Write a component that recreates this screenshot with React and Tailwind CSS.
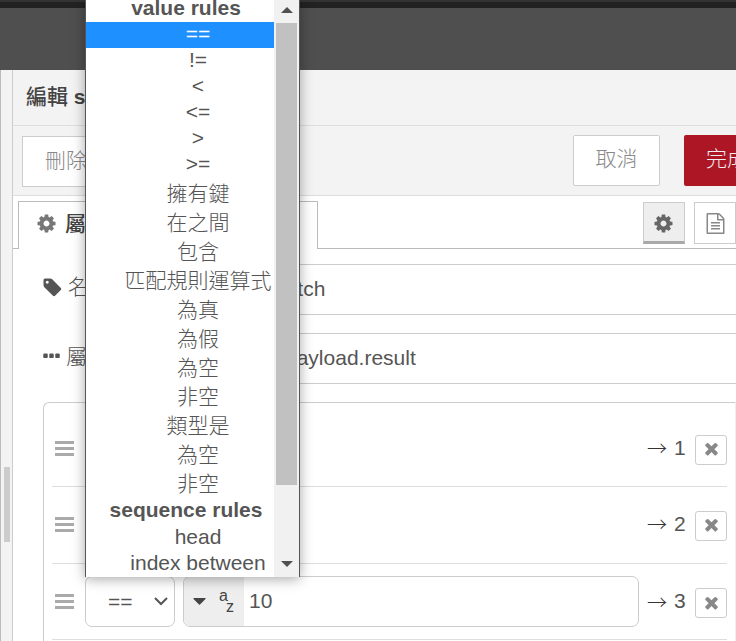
import React from "react";

const PATHS = {
  cog: "M1152 896q0-106-75-181t-181-75-181 75-75 181 75 181 181 75 181-75 75-181zm512-109v222q0 12-8 23t-20 13l-185 28q-19 54-39 91 35 50 107 138 10 12 10 25t-9 23q-27 37-99 108t-94 71q-12 0-26-9l-138-108q-44 23-91 38-16 136-29 186-7 28-36 28h-222q-14 0-24.5-8.5t-11.5-21.5l-28-184q-49-16-90-37l-141 107q-10 9-25 9-14 0-25-11-126-114-165-168-7-10-7-23 0-12 8-23 15-21 51-66.5t54-70.5q-27-50-41-99l-183-27q-13-2-21-12.5t-8-23.5v-222q0-12 8-23t19-13l186-28q14-46 39-92-40-57-107-138-10-12-10-24 0-10 9-23 26-36 98.500-107.500t94.500-71.500q13 0 26 10l138 107q44-23 91-38 16-136 29-186 7-28 36-28h222q14 0 24.500 8.500t11.500 21.500l28 184q49 16 90 37l142-107q9-9 24-9 13 0 25 10 129 119 165 170 7 8 7 22 0 12-8 23-15 21-51 66.500t-54 70.500q26 50 41 98l183 28q13 2 21 12.500t8 23.500z",
  times: "M1490 1322q0 40-28 68l-136 136q-28 28-68 28t-68-28l-294-294-294 294q-28 28-68 28t-68-28l-136-136q-28-28-28-68t28-68l294-294-294-294q-28-28-28-68t28-68l136-136q28-28 68-28t68 28l294 294 294-294q28-28 68-28t68 28l136 136q28 28 28 68t-28 68l-294 294 294 294q28 28 28 68z",
  tag: "M576 448q0-53-37.5-90.5t-90.5-37.5-90.5 37.5-37.5 90.5 37.5 90.5 90.5 37.5 90.5-37.5 37.5-90.5zm1067 576q0 53-37 90l-491 492q-39 37-91 37-53 0-90-37l-715-716q-38-37-64.5-101t-26.5-117v-416q0-52 38-90t90-38h416q53 0 117 26.5t102 64.5l715 714q37 39 37 91z",
  ellipsis: "M576 736v192q0 40-28 68t-68 28h-192q-40 0-68-28t-28-68v-192q0-40 28-68t68-28h192q40 0 68 28t28 68zm512 0v192q0 40-28 68t-68 28h-192q-40 0-68-28t-28-68v-192q0-40 28-68t68-28h192q40 0 68 28t28 68zm512 0v192q0 40-28 68t-68 28h-192q-40 0-68-28t-28-68v-192q0-40 28-68t68-28h192q40 0 68 28t28 68z",
  file: "M1596 380q28 28 48 76t20 88v1152q0 40-28 68t-68 28h-1344q-40 0-68-28t-28-68v-1600q0-40 28-68t68-28h896q40 0 88 20t76 48zm-444-244v376h376q-10-29-22-41l-313-313q-12-12-41-22zm384 1528v-1024h-416q-40 0-68-28t-28-68v-416h-768v1536h1280zm-1024-864q0-14 9-23t23-9h704q14 0 23 9t9 23v64q0 14-9 23t-23 9h-704q-14 0-23-9t-9-23v-64zm736 224q14 0 23 9t9 23v64q0 14-9 23t-23 9h-704q-14 0-23-9t-9-23v-64q0-14 9-23t23-9h704zm0 256q14 0 23 9t9 23v64q0 14-9 23t-23 9h-704q-14 0-23-9t-9-23v-64q0-14 9-23t23-9h704z",
};

function Icon({ name, className }) {
  return (
    <svg viewBox="0 0 1792 1792" className={"shrink-0 " + className} fill="currentColor">
      <path d={PATHS[name]} />
    </svg>
  );
}

function Grip() {
  return (
    <div className="flex w-[19px] shrink-0 flex-col gap-[3px]">
      <div className="h-[3px] bg-[#aaa]" />
      <div className="h-[3px] bg-[#aaa]" />
      <div className="h-[3px] bg-[#aaa]" />
    </div>
  );
}

function Rule({ index, className, children }) {
  return (
    <div className={"flex items-center border-b border-[#ddd] pl-[3px] " + className}>
      <Grip />
      {children}
      <div className="ml-auto flex items-center">
        <span className="w-5 font-['Noto_Sans_CJK_TC',sans-serif] text-[20px] leading-6 font-light text-[#333]">→</span>
        <span className="mr-[9px] ml-[7px] w-3 pb-px text-[21px] leading-6">{index}</span>
        <button className="mt-[3px] flex h-[30px] w-8 items-center justify-center rounded-[3px] border border-[#ccc] bg-white pb-[2px] text-[#888]">
          <Icon name="times" className="size-[19px]" />
        </button>
      </div>
    </div>
  );
}

const OPERATORS = ["==", "!=", "<", "<=", ">", ">="];
const WORDS = ["擁有鍵", "在之間", "包含", "匹配規則運算式", "為真", "為假", "為空", "非空", "類型是", "為空", "非空"];

function Menu() {
  return (
    <div className="absolute top-0 left-[85px] flex h-[577px] w-[215px] overflow-hidden border-x border-[#555] bg-white text-center text-[21px] whitespace-nowrap text-[#555] shadow-[0_2px_12px_rgba(0,0,0,0.35)]">
      <div className="w-[188px] shrink-0">
        <div className="-mt-[5px] h-[27px] pr-3 pl-6 leading-[26px] font-bold">value rules</div>
        {OPERATORS.map((op, i) => (
          <div key={op} className={"h-[26px] pl-9 leading-6 " + (i === 0 ? "bg-[#1e90ff] text-white" : "")}>
            {op}
          </div>
        ))}
        <div className="pt-px font-light">
          {WORDS.map((word, i) => (
            <div key={i} className="h-[29px] pl-9 leading-[29px]">{word}</div>
          ))}
        </div>
        <div className="h-[26px] pl-3 leading-[23px] font-bold">sequence rules</div>
        <div className="h-[26px] pl-9 leading-[26px]">head</div>
        <div className="h-[26px] pl-9 leading-[26px]">index between</div>
      </div>
      <div className="flex w-[25px] flex-col items-center bg-[#f1f1f1]">
        <svg className="h-[23px] w-3 shrink-0" viewBox="0 0 12 23" fill="#505050"><path d="M0 13 6 7l6 6z" /></svg>
        <div className="h-[462px] w-[21px] shrink-0 bg-[#c1c1c1]" />
        <svg className="mt-auto h-[26px] w-3 shrink-0" viewBox="0 0 12 26" fill="#505050"><path d="M0 10h12l-6 6z" /></svg>
      </div>
    </div>
  );
}

export default function App() {
  return (
    <div className="relative flex h-[641px] w-[736px] flex-col overflow-hidden bg-white font-['Liberation_Sans','Noto_Sans_CJK_TC',sans-serif] text-[21px] text-[#555]">
      <div className="h-[70px] shrink-0 border-t-2 border-[#333] bg-[#4f4f4f]">
        <div className="h-1.5 bg-[#222]" />
      </div>
      <div className="flex min-h-0 grow">
        <div className="w-[13px] shrink-0 border-x border-l-[#bbb] border-r-[#ccc] bg-[#f3f3f3] pt-[397px] pl-[3px]">
          <div className="h-[75px] w-[6px] bg-[#ccc]" />
        </div>
        <div className="flex w-[723px] shrink-0 flex-col">
          <div className="h-14 shrink-0 border-b border-[#ddd] bg-[#f3f3f3] pl-[13px] leading-[53px] whitespace-nowrap text-[#444]">
            <span className="font-medium">編輯</span> <span className="font-bold">switch</span>
          </div>
          <div className="flex h-[70px] shrink-0 overflow-hidden border-b border-[#ddd] bg-[#f3f3f3] pt-[9px] pl-[9px] font-light whitespace-nowrap text-[#888]">
            <button className="mt-px flex h-[51px] w-[88px] shrink-0 items-center justify-center border border-[#ccc] bg-white pb-0.5">刪除</button>
            <button className="ml-[463px] flex h-[51px] w-[87px] shrink-0 items-center justify-center rounded-[2px] border border-[#ccc] bg-white pb-1">取消</button>
            <button className="ml-6 flex h-[51px] w-[88px] shrink-0 items-center justify-center rounded-l-[2px] bg-[#ad1625] pr-0.5 pb-1 text-[#eee]">完成</button>
          </div>
          <div className="flex h-[53px] shrink-0 items-end">
            <div className="h-px w-[5px] bg-[#bbb]" />
            <div className="flex h-12 w-[300px] items-center border border-b-0 border-[#bbb] pb-1 pl-[17px] text-[#444]">
              <Icon name="cog" className="size-[21px] text-[#777]" />
              <span className="ml-2 font-medium">屬性</span>
            </div>
            <div className="flex h-full grow justify-end gap-[9px] border-b border-[#bbb] pt-1.5">
              <button className="flex h-[42px] w-[42px] items-center justify-center border border-b-[3px] border-[#ccc] border-b-[#aaa] bg-[#eee] pt-[2px] pr-px text-[#666]">
                <Icon name="cog" className="size-[21px]" />
              </button>
              <button className="flex h-[42px] w-[42px] items-center justify-center border border-[#ccc] pt-px text-[#888]">
                <Icon name="file" className="size-[21px]" />
              </button>
            </div>
          </div>
          <div className="flex flex-col pl-[30px]">
            <div className="mt-[15px] flex h-[51px] items-center">
              <Icon name="tag" className="mb-[5px] -ml-px size-[21px]" />
              <span className="ml-[5px] w-[145px] pb-1.5 font-light">名稱</span>
              <div className="flex h-full grow items-center border-y border-l border-[#ccc] pb-0.5 pl-[53px]">switch</div>
            </div>
            <div className="mt-[18px] flex h-[51px] items-center">
              <Icon name="ellipsis" className="mb-1 -ml-[2px] size-[21px]" />
              <span className="ml-1 w-[147px] pb-1 font-light">屬性</span>
              <div className="flex h-full grow items-center border-y border-l border-[#ccc] pb-0.5 pl-[71px]">payload.result</div>
            </div>
            <div className="mt-[18px] h-[260px] rounded-tl-[6px] border border-[#ccc] border-r-[#eee] px-2 pt-[7px]">
              <Rule index={1} className="h-[77px]" />
              <Rule index={2} className="h-[77px] pb-0.5" />
              <Rule index={3} className="h-[76px]">
                <div className="ml-[11px] flex h-[51px] w-[90px] shrink-0 items-center rounded-[7px] border border-[#ccc] pl-[22px]">
                  <span className="w-6">==</span>
                  <svg className="ml-[22px] h-[9px] w-[14px]" viewBox="0 0 14 9" fill="none" stroke="#555" strokeWidth="2"><path d="m1 1 6 6 6-6" /></svg>
                </div>
                <div className="ml-2 flex h-[51px] w-[456px] shrink-0 items-center overflow-hidden rounded-[7px] border border-[#ccc]">
                  <div className="flex h-full w-[60px] items-center bg-[#eee] pl-[9px]">
                    <svg className="h-[7px] w-[13px]" viewBox="0 0 13 7" fill="#444"><path d="M1 0h11q1 0 .5 1L7 6.600q-.5.400-1 0L.5 1Q0 0 1 0z" /></svg>
                    <div className="ml-[13px] flex w-[15px] flex-col text-[16px] leading-[11px] text-[#444]">
                      <span className="-mt-px">a</span>
                      <span className="self-end">z</span>
                    </div>
                  </div>
                  <span className="pb-0.5 pl-[5px]">10</span>
                </div>
              </Rule>
            </div>
          </div>
        </div>
      </div>
      <Menu />
    </div>
  );
}
